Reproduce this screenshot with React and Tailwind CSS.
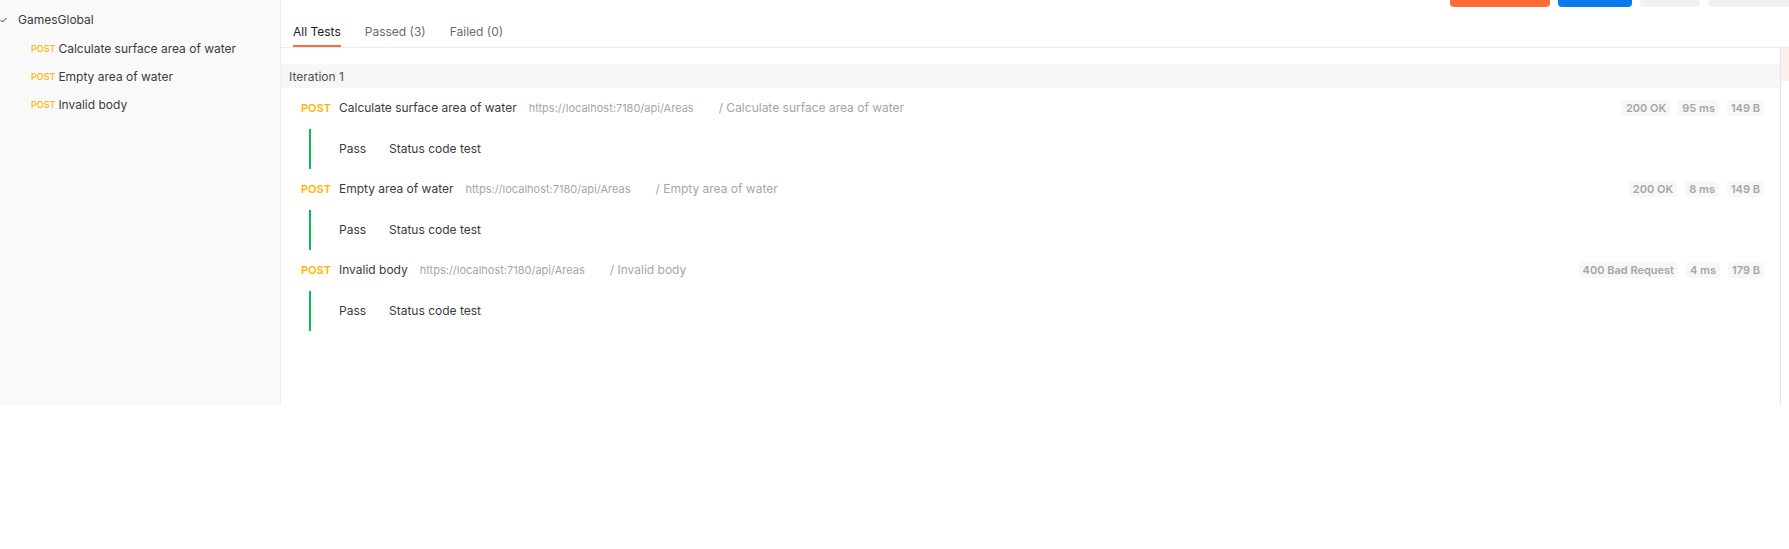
import { Fragment } from 'react';

const sidebarItems = ['Calculate surface area of water', 'Empty area of water', 'Invalid body'];

const requests = [
  { name: 'Calculate surface area of water', url: 'https://localhost:7180/api/Areas', status: '200 OK', time: '95 ms', size: '149 B' },
  { name: 'Empty area of water', url: 'https://localhost:7180/api/Areas', status: '200 OK', time: '8 ms', size: '149 B' },
  { name: 'Invalid body', url: 'https://localhost:7180/api/Areas', status: '400 Bad Request', time: '4 ms', size: '179 B' },
];

const Badge = ({ children }) => (
  <span className="flex h-4 items-center rounded-[4px] bg-[#f7f7f7] px-[4px] text-[11px] font-semibold leading-4 text-[#a6a6a6]">
    {children}
  </span>
);

const App = () => {
  return (
    <div className="flex h-[405px] w-full font-['Inter',sans-serif] text-xs text-[#3b3b3b]">
      <aside className="w-[281px] shrink-0 border-r border-[#ededed] bg-[#f9f9f9] pt-[12px]">
        <div className="flex h-4 items-center">
          <svg width="7" height="6" viewBox="0 0 7 6" className="mr-[11px]" fill="none">
            <path d="M0.5 3 L2.5 5 L6.5 1" stroke="#3b3b3b" strokeWidth="1" />
          </svg>
          <span className="leading-4">GamesGlobal</span>
        </div>
        <div className="mt-[7px] pl-[31px]">
          {sidebarItems.map((item) => (
            <div key={item} className="flex h-7 items-center">
              <span className="mr-[3px] text-[9px] font-medium text-[#ffb400]">POST</span>
              <span>{item}</span>
            </div>
          ))}
        </div>
      </aside>

      <main className="flex min-w-0 flex-1 flex-col">
        <div className="flex h-[7px] shrink-0 justify-end gap-2">
          <div className="w-[100px] rounded-b-[4px] bg-[#ff6c37]" />
          <div className="w-[74px] rounded-b-[4px] bg-[#097bed]" />
          <div className="w-[60px] rounded-b-[4px] bg-[#f2f2f2]" />
          <div className="w-[81px] rounded-bl-[4px] bg-[#f2f2f2]" />
        </div>
        <div className="flex h-[41px] shrink-0 items-end gap-6 border-b border-[#ededed] pl-3">
          <div className="border-b-2 border-[#ff6c37] pb-[5px] leading-4 text-[#212121]">All Tests</div>
          <div className="border-b-2 border-transparent pb-[5px] leading-4 text-[#6b6b6b]">Passed (3)</div>
          <div className="border-b-2 border-transparent pb-[5px] leading-4 text-[#6b6b6b]">Failed (0)</div>
        </div>

        <div className="flex flex-1">
          <div className="flex-1 border-r border-[#e6e6e6] pt-4">
            <div className="flex h-6 items-center bg-[#f7f7f7] px-2 pt-[2px] text-[#505050]">Iteration 1</div>
            <div className="pl-5 pr-4">
              {requests.map((r) => (
                <Fragment key={r.name}>
                  <div className="flex h-[38px] items-center pt-[2px]">
                    <span className="text-[11px] font-semibold text-[#ffb400]">POST</span>
                    <span className="ml-[8px]">{r.name}</span>
                    <span className="ml-[12px] text-[11px] text-[#a6a6a6]">{r.url}</span>
                    <span className="ml-[25px] text-[#a6a6a6]">/ {r.name}</span>
                    <div className="ml-auto flex gap-2">
                      <Badge>{r.status}</Badge>
                      <Badge>{r.time}</Badge>
                      <Badge>{r.size}</Badge>
                    </div>
                  </div>
                  <div className="ml-2 mt-[3px] flex h-10 items-center border-l-2 border-[#0cbb52] pl-7">
                    <span className="w-[50px]">Pass</span>
                    <span>Status code test</span>
                  </div>
                </Fragment>
              ))}
            </div>
          </div>
          <div className="w-2 shrink-0">
            <div className="h-[33px] bg-[#fff0eb]" />
          </div>
        </div>
      </main>
    </div>
  );
};

export default App;
